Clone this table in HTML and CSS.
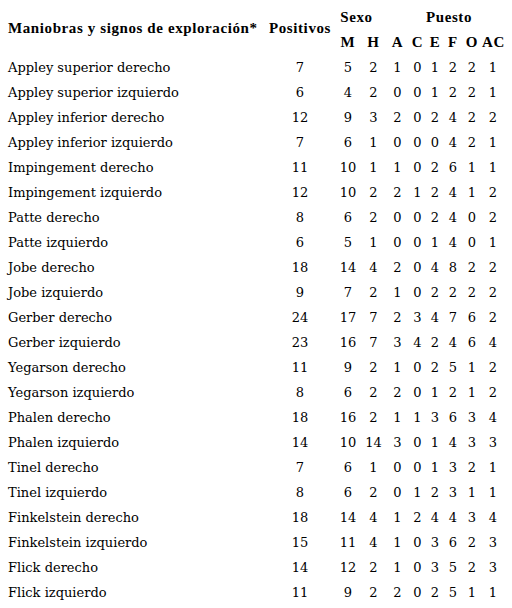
FILE: index.html
```html
<!DOCTYPE html>
<html lang="es">
<head>
<meta charset="utf-8">
<title>Maniobras y signos de exploración</title>
<link rel="stylesheet" href="styles.css">
</head>
<body>
<table class="tbl">
  <colgroup>
    <col class="c-label"><col class="c-pos"><col class="c-m"><col class="c-h"><col class="c-a"><col class="c-c"><col class="c-e"><col class="c-f"><col class="c-o"><col class="c-ac">
  </colgroup>
  <thead>
    <tr class="h1">
      <th rowspan="2" class="lbl span">Maniobras y signos de exploración*</th>
      <th rowspan="2" class="span">Positivos</th>
      <th colspan="2" class="sexo">Sexo</th>
      <th colspan="6" class="puesto">Puesto</th>
    </tr>
    <tr class="h2">
      <th>M</th><th>H</th><th>A</th><th>C</th><th>E</th><th>F</th><th>O</th><th>AC</th>
    </tr>
  </thead>
  <tbody>
    <tr><td>Appley superior derecho</td><td>7</td><td>5</td><td>2</td><td>1</td><td>0</td><td>1</td><td>2</td><td>2</td><td>1</td></tr>
    <tr><td>Appley superior izquierdo</td><td>6</td><td>4</td><td>2</td><td>0</td><td>0</td><td>1</td><td>2</td><td>2</td><td>1</td></tr>
    <tr><td>Appley inferior derecho</td><td>12</td><td>9</td><td>3</td><td>2</td><td>0</td><td>2</td><td>4</td><td>2</td><td>2</td></tr>
    <tr><td>Appley inferior izquierdo</td><td>7</td><td>6</td><td>1</td><td>0</td><td>0</td><td>0</td><td>4</td><td>2</td><td>1</td></tr>
    <tr><td>Impingement derecho</td><td>11</td><td>10</td><td>1</td><td>1</td><td>0</td><td>2</td><td>6</td><td>1</td><td>1</td></tr>
    <tr><td>Impingement izquierdo</td><td>12</td><td>10</td><td>2</td><td>2</td><td>1</td><td>2</td><td>4</td><td>1</td><td>2</td></tr>
    <tr><td>Patte derecho</td><td>8</td><td>6</td><td>2</td><td>0</td><td>0</td><td>2</td><td>4</td><td>0</td><td>2</td></tr>
    <tr><td>Patte izquierdo</td><td>6</td><td>5</td><td>1</td><td>0</td><td>0</td><td>1</td><td>4</td><td>0</td><td>1</td></tr>
    <tr><td>Jobe derecho</td><td>18</td><td>14</td><td>4</td><td>2</td><td>0</td><td>4</td><td>8</td><td>2</td><td>2</td></tr>
    <tr><td>Jobe izquierdo</td><td>9</td><td>7</td><td>2</td><td>1</td><td>0</td><td>2</td><td>2</td><td>2</td><td>2</td></tr>
    <tr><td>Gerber derecho</td><td>24</td><td>17</td><td>7</td><td>2</td><td>3</td><td>4</td><td>7</td><td>6</td><td>2</td></tr>
    <tr><td>Gerber izquierdo</td><td>23</td><td>16</td><td>7</td><td>3</td><td>4</td><td>2</td><td>4</td><td>6</td><td>4</td></tr>
    <tr><td>Yegarson derecho</td><td>11</td><td>9</td><td>2</td><td>1</td><td>0</td><td>2</td><td>5</td><td>1</td><td>2</td></tr>
    <tr><td>Yegarson izquierdo</td><td>8</td><td>6</td><td>2</td><td>2</td><td>0</td><td>1</td><td>2</td><td>1</td><td>2</td></tr>
    <tr><td>Phalen derecho</td><td>18</td><td>16</td><td>2</td><td>1</td><td>1</td><td>3</td><td>6</td><td>3</td><td>4</td></tr>
    <tr><td>Phalen izquierdo</td><td>14</td><td>10</td><td>14</td><td>3</td><td>0</td><td>1</td><td>4</td><td>3</td><td>3</td></tr>
    <tr><td>Tinel derecho</td><td>7</td><td>6</td><td>1</td><td>0</td><td>0</td><td>1</td><td>3</td><td>2</td><td>1</td></tr>
    <tr><td>Tinel izquierdo</td><td>8</td><td>6</td><td>2</td><td>0</td><td>1</td><td>2</td><td>3</td><td>1</td><td>1</td></tr>
    <tr><td>Finkelstein derecho</td><td>18</td><td>14</td><td>4</td><td>1</td><td>2</td><td>4</td><td>4</td><td>3</td><td>4</td></tr>
    <tr><td>Finkelstein izquierdo</td><td>15</td><td>11</td><td>4</td><td>1</td><td>0</td><td>3</td><td>6</td><td>2</td><td>3</td></tr>
    <tr><td>Flick derecho</td><td>14</td><td>12</td><td>2</td><td>1</td><td>0</td><td>3</td><td>5</td><td>2</td><td>3</td></tr>
    <tr><td>Flick izquierdo</td><td>11</td><td>9</td><td>2</td><td>2</td><td>0</td><td>2</td><td>5</td><td>1</td><td>1</td></tr>
  </tbody>
</table>
</body>
</html>
```

FILE: styles.css
```css
html, body {
  margin: 0;
  background: #ffffff;
}
body {
  padding: 0 8px;
  color: #000000;
  font-family: "DejaVu Serif", serif;
  font-size: 13px;
}
.tbl {
  border-collapse: separate;
  border-spacing: 0;
  table-layout: fixed;
  width: 496px;
}
.c-label { width: 257px; }
.c-pos { width: 70px; }
.c-m { width: 26px; }
.c-h { width: 25px; }
.c-a { width: 23px; }
.c-c { width: 17px; }
.c-e { width: 18px; }
.c-f { width: 18px; }
.c-o { width: 20px; }
.c-ac { width: 22px; }
th {
  font-family: "Liberation Serif", "Times New Roman", serif;
  font-size: 15px;
  font-weight: bold;
  letter-spacing: 0.6px;
  padding: 0;
  text-align: center;
  white-space: nowrap;
  vertical-align: middle;
}
th.lbl { text-align: left; }
.h1 th { height: 28px; padding-top: 3px; }
.h1 th.span { padding-top: 2px; }
.h1 th.sexo { padding-right: 8px; }
.h1 th.puesto { padding-left: 8px; }
.h2 th { height: 22px; padding-bottom: 2px; }
td {
  padding: 0;
  height: 25px;
  text-align: center;
  white-space: nowrap;
}
td:first-child { text-align: left; }
```
